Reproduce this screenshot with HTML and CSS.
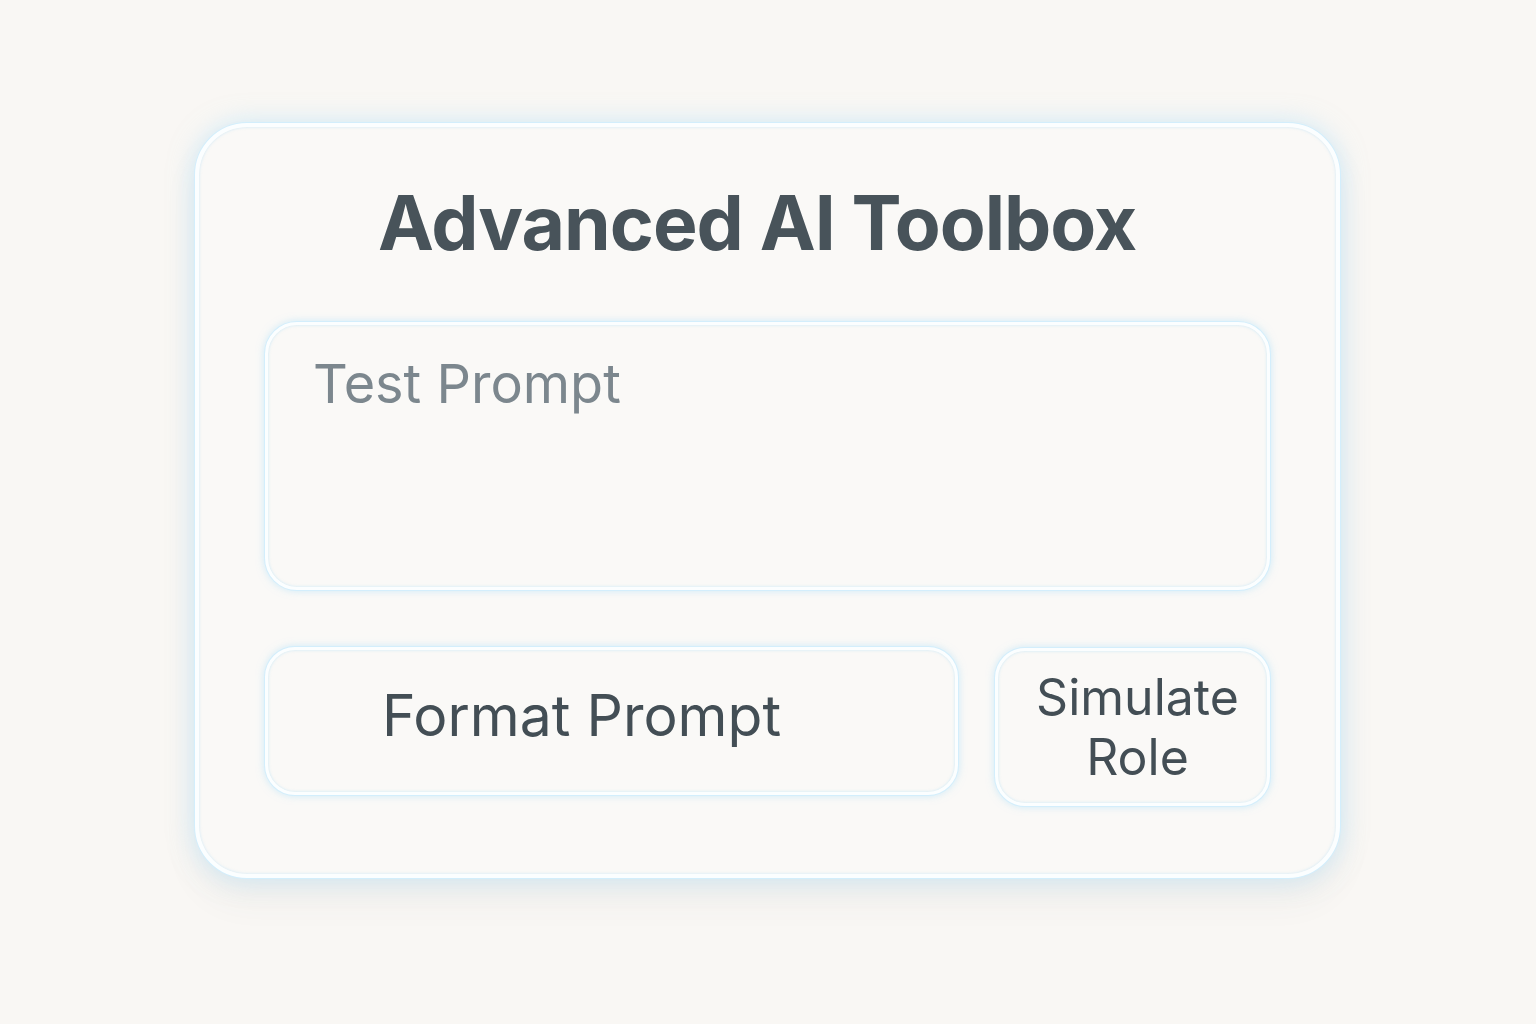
FILE: index.html
```html
<!DOCTYPE html>
<html lang="en">
<head>
    <meta charset="UTF-8">
    <meta name="viewport" content="width=device-width, initial-scale=1.0">
    <title>Advanced AI Toolbox</title>
    <link rel="stylesheet" href="styles.css">
</head>
<body>

<!-- Toolbox card -->
<div class="toolbox">
    <h1 class="title">Advanced AI Toolbox</h1>

    <textarea class="prompt" placeholder="Test Prompt"></textarea>

    <div class="actions">
        <button class="btn btn-format" type="button">Format Prompt</button>
        <button class="btn btn-role" type="button">Simulate<br>Role</button>
    </div>
</div>

</body>
</html>
```

FILE: styles.css
```css
html, body {
    min-height: 100vh;
}

body {
    margin: 0;
    padding-top: 123px;
    box-sizing: border-box;
    background-color: #f9f7f4;
    font-family: Inter, "Noto Sans", sans-serif;
    color: #434e55;
}

/* Main card */
.toolbox {
    box-sizing: border-box;
    width: 1145px;
    height: 755px;
    margin-left: 195px;
    padding: 56px 66px 0 66px;
    background-color: #faf9f7;
    border: 4px solid #fbfeff;
    border-radius: 52px;
    box-shadow: 0 0 0 1px #d3eefc,
                0 0 26px rgba(160, 220, 252, 0.5),
                inset 0 0 3px rgba(160, 215, 250, 0.5),
                0 22px 36px rgba(60, 80, 100, 0.06);
}

.title {
    margin: 0 0 0 113px;
    font-size: 75px;
    font-weight: 700;
    line-height: 80px;
    color: #48535a;
    letter-spacing: -1px;
}

/* Text field */
.prompt {
    display: block;
    box-sizing: border-box;
    width: 1005px;
    height: 268px;
    margin: 59px 0 0 0;
    padding: 25px 45px;
    resize: none;
    background-color: #faf9f7;
    border: 3px solid #fbfeff;
    border-radius: 32px;
    box-shadow: 0 0 0 1px #d3eefc,
                0 0 8px rgba(150, 215, 250, 0.55),
                inset 0 0 3px rgba(150, 215, 250, 0.5);
    font-family: Inter, "Noto Sans", sans-serif;
    font-size: 54px;
    line-height: 68px;
    color: #434e55;
    outline: none;
}

.prompt::placeholder {
    color: #7c878e;
}

/* Buttons row */
.actions {
    display: flex;
    gap: 37px;
    margin-top: 57px;
    align-items: flex-start;
}

.btn {
    box-sizing: border-box;
    background-color: #faf9f7;
    border: 3px solid #fbfeff;
    border-radius: 30px;
    box-shadow: 0 0 0 1px #d3eefc,
                0 0 8px rgba(150, 215, 250, 0.55),
                inset 0 0 3px rgba(150, 215, 250, 0.5);
    font-family: Inter, "Noto Sans", sans-serif;
    color: #434e55;
    cursor: pointer;
}

.btn-format {
    width: 693px;
    height: 148px;
    padding: 0 60px 12px 0;
    font-size: 57px;
}

.btn-role {
    width: 275px;
    height: 158px;
    margin-top: 1px;
    padding: 0 0 0 10px;
    font-size: 50px;
    line-height: 60px;
}
```
